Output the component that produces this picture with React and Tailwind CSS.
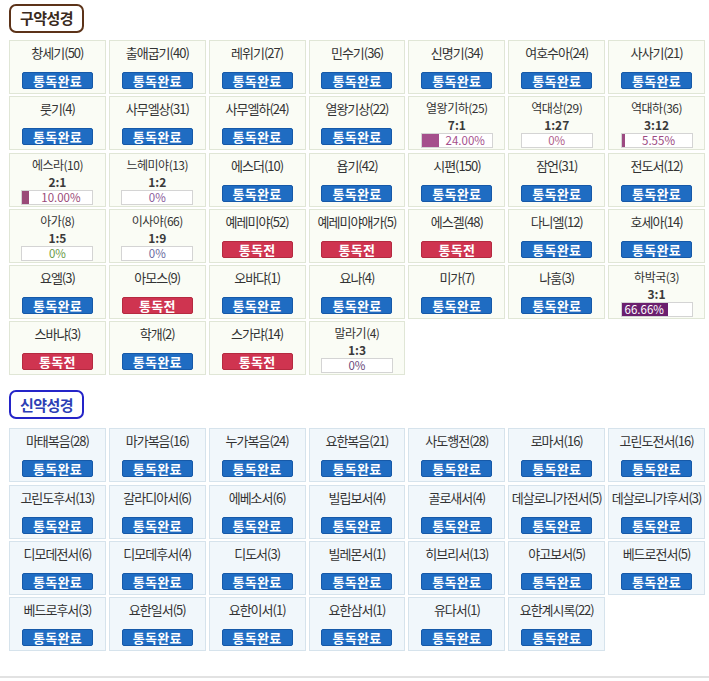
import React from "react";

const FONT = { fontFamily: '"Malgun Gothic", "Noto Sans CJK KR", "Noto Sans", sans-serif' };

// status: "done" | "before" | progress object
const oldTestament = [
  ["창세기(50)", "done"], ["출애굽기(40)", "done"], ["레위기(27)", "done"], ["민수기(36)", "done"],
  ["신명기(34)", "done"], ["여호수아(24)", "done"], ["사사기(21)", "done"],
  ["룻기(4)", "done"], ["사무엘상(31)", "done"], ["사무엘하(24)", "done"], ["열왕기상(22)", "done"],
  ["열왕기하(25)", { ratio: "7:1", pct: 24, label: "24.00%", fill: "#a54f8c", color: "#a54f8c" }],
  ["역대상(29)", { ratio: "1:27", pct: 0, label: "0%", fill: "#a54f8c", color: "#b0608a" }],
  ["역대하(36)", { ratio: "3:12", pct: 5.55, label: "5.55%", fill: "#9c4a82", color: "#9c4a82" }],
  ["에스라(10)", { ratio: "2:1", pct: 10, label: "10.00%", fill: "#9a4a78", color: "#9a4a78" }],
  ["느헤미야(13)", { ratio: "1:2", pct: 0, label: "0%", fill: "#9a4a78", color: "#8a5a9a" }],
  ["에스더(10)", "done"], ["욥기(42)", "done"], ["시편(150)", "done"], ["잠언(31)", "done"], ["전도서(12)", "done"],
  ["아가(8)", { ratio: "1:5", pct: 0, label: "0%", fill: "#6a9a48", color: "#6a9a48" }],
  ["이사야(66)", { ratio: "1:9", pct: 0, label: "0%", fill: "#6a6aa0", color: "#6a6aa0" }],
  ["예레미야(52)", "before"], ["예레미야애가(5)", "before"], ["에스겔(48)", "before"],
  ["다니엘(12)", "done"], ["호세아(14)", "done"],
  ["요엘(3)", "done"], ["아모스(9)", "before"], ["오바댜(1)", "done"], ["요나(4)", "done"],
  ["미가(7)", "done"], ["나훔(3)", "done"],
  ["하박국(3)", { ratio: "3:1", pct: 66.66, label: "66.66%", fill: "#6b1f6e", color: "#ffffff" }],
  ["스바냐(3)", "before"], ["학개(2)", "done"], ["스가랴(14)", "before"],
  ["말라기(4)", { ratio: "1:3", pct: 0, label: "0%", fill: "#6a4a7a", color: "#6a4a7a" }],
];

const newTestament = [
  "마태복음(28)", "마가복음(16)", "누가복음(24)", "요한복음(21)", "사도행전(28)", "로마서(16)", "고린도전서(16)",
  "고린도후서(13)", "갈라디아서(6)", "에베소서(6)", "빌립보서(4)", "골로새서(4)", "데살로니가전서(5)", "데살로니가후서(3)",
  "디모데전서(6)", "디모데후서(4)", "디도서(3)", "빌레몬서(1)", "히브리서(13)", "야고보서(5)", "베드로전서(5)",
  "베드로후서(3)", "요한일서(5)", "요한이서(1)", "요한삼서(1)", "유다서(1)", "요한계시록(22)",
];

function StatusButton({ done }) {
  return (
    <div
      className={
        "mx-auto mt-[11px] flex h-[17px] w-[71px] items-center justify-center rounded-[2px] border text-[13px] font-semibold leading-none tracking-[0.3px] text-white " +
        (done ? "border-[#1659a8] bg-[#1f6cc2]" : "border-[#b52a40] bg-[#cf3450]")
      }
    >
      {done ? "통독완료" : "통독전"}
    </div>
  );
}

function ProgressBox({ p }) {
  const inside = p.pct >= 50;
  return (
    <div className="mx-auto flex h-[15px] w-[72px] overflow-hidden border border-[#d4d4d4] bg-white text-[11.5px] leading-[13px]">
      <div
        className={"h-full shrink-0 text-left text-white" + (inside ? " pl-[3px]" : "")}
        style={{ width: `${p.pct}%`, background: p.fill }}
      >
        {inside ? p.label : ""}
      </div>
      {!inside && (
        <div className="flex-1 text-center" style={{ color: p.color }}>
          {p.label}
        </div>
      )}
    </div>
  );
}

function BookCell({ name, status, nt }) {
  const progress = typeof status === "object";
  return (
    <div
      className={
        "h-[54px] overflow-hidden border text-center text-[#333] " +
        (nt ? "border-[#d6e3ec] bg-[#f1f7fb]" : "border-[#e0e6d6] bg-[#fafcf5]") +
        (progress ? " pt-[2px] text-[12px]" : " pt-[4px] text-[13px]")
      }
    >
      {progress ? (
        <>
          <div className="whitespace-nowrap leading-[17px] tracking-[-0.5px]">{name}</div>
          <div className="font-semibold leading-[17px] text-[#3a3a3a]">{status.ratio}</div>
          <ProgressBox p={status} />
        </>
      ) : (
        <>
          <div className="whitespace-nowrap leading-[16px] tracking-[-1px]">{name}</div>
          <StatusButton done={status === "done"} />
        </>
      )}
    </div>
  );
}

function SectionBadge({ label, tone }) {
  return (
    <div
      className={
        "inline-flex h-[29px] w-[75px] items-center justify-center rounded-[7px] border-2 text-[15px] font-semibold tracking-[-0.5px] " +
        (tone === "old" ? "border-[#5c3319] text-[#3a2a20]" : "border-[#2424c8] text-[#2d3fb5]")
      }
    >
      {label}
    </div>
  );
}

export default function App() {
  return (
    <div className="min-h-[681px] w-[709px] bg-white" style={FONT}>
      <div className="border-b-2 border-[#e2e2e2] pb-[25px] pl-[9px] pr-[4px] pt-[4px]">
        <SectionBadge label="구약성경" tone="old" />
        <div className="mt-[7px] grid grid-cols-7 gap-x-[3px] gap-y-[2.3px]">
          {oldTestament.map(([name, status]) => (
            <BookCell key={name} name={name} status={status} />
          ))}
        </div>

        <div className="mt-[15px]">
          <SectionBadge label="신약성경" tone="new" />
        </div>
        <div className="mt-[9px] grid grid-cols-7 gap-x-[3px] gap-y-[2.3px]">
          {newTestament.map((name) => (
            <BookCell key={name} name={name} status="done" nt />
          ))}
        </div>
      </div>
    </div>
  );
}
